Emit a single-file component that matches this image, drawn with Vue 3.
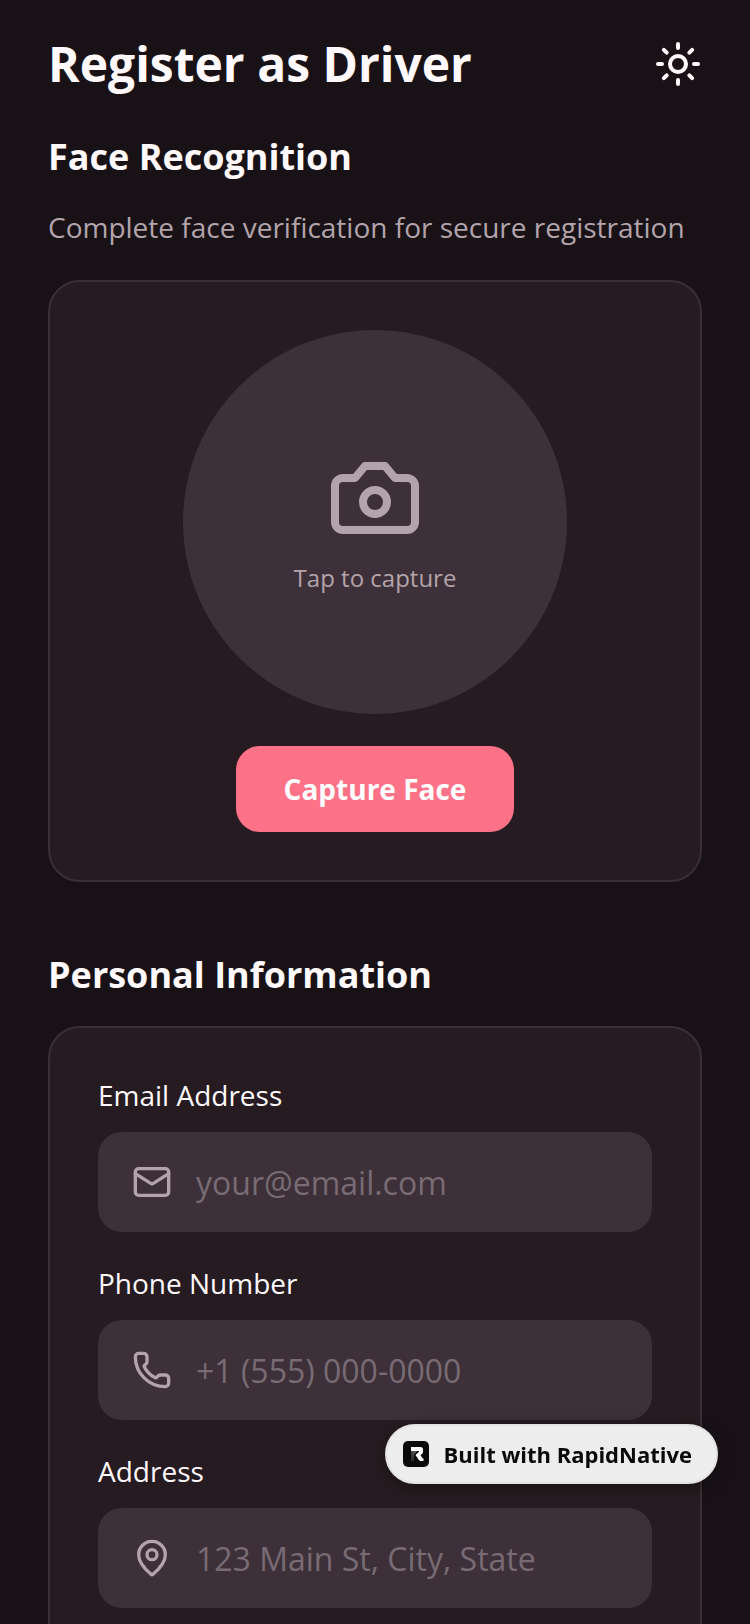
<template>
  <div class="screen">
    <header class="header">
      <h1 class="title">Register as Driver</h1>
      <button class="theme-toggle" type="button" aria-label="Toggle theme">
        <svg viewBox="0 0 24 24" class="icon">
          <circle cx="12" cy="12" r="4" />
          <path d="M12 2v2M12 20v2M4.93 4.93l1.41 1.41M17.66 17.66l1.41 1.41M2 12h2M20 12h2M6.34 17.66l-1.41 1.41M19.07 4.93l-1.41 1.41" />
        </svg>
      </button>
    </header>

    <section class="section">
      <h2 class="heading">Face Recognition</h2>
      <p class="subtitle">Complete face verification for secure registration</p>
      <div class="card face-card">
        <button class="face-circle" type="button">
          <svg viewBox="0 0 24 24" class="icon camera">
            <path d="M14.5 4h-5L7 7H4a2 2 0 0 0-2 2v9a2 2 0 0 0 2 2h16a2 2 0 0 0 2-2V9a2 2 0 0 0-2-2h-3l-2.5-3z" />
            <circle cx="12" cy="13" r="3" />
          </svg>
          <span>Tap to capture</span>
        </button>
        <button class="capture-button" type="button">Capture Face</button>
      </div>
    </section>

    <section class="section">
      <h2 class="heading">Personal Information</h2>
      <form class="card form-card" @submit.prevent>
        <div v-for="field in fields" :key="field.id" class="field">
          <label :for="field.id">{{ field.label }}</label>
          <div class="input-row">
            <svg viewBox="0 0 24 24" class="icon field-icon">
              <path v-for="d in field.icon" :key="d" :d="d" />
            </svg>
            <input
              :id="field.id"
              v-model="form[field.id]"
              :type="field.type"
              :placeholder="field.placeholder"
            >
          </div>
        </div>
      </form>
    </section>

    <a class="badge" href="#">
      <svg viewBox="0 0 26 26" class="badge-logo">
        <defs>
          <linearGradient id="fade" x1="1" y1="0" x2="0" y2="1">
            <stop offset="0" stop-color="#666" />
            <stop offset="1" stop-color="#1c1c1c" />
          </linearGradient>
        </defs>
        <rect width="26" height="26" rx="5" fill="#0a0a0a" />
        <path d="M8 10h6l-3 4v6H8z" fill="url(#fade)" />
        <path d="M8 6h9.500Q20 6 20 8.500V11q0 2-2.500 3l1.500 2.500q.5 1 1.500 1V20H18q-1.500 0-2.500-1.500L12.500 14l3.500-3.200V10H8z" fill="#fff" />
      </svg>
      <span>Built with RapidNative</span>
    </a>
  </div>
</template>

<script setup>
import { reactive } from 'vue'

const form = reactive({
  email: '',
  phone: '',
  address: ''
})

const fields = [
  {
    id: 'email',
    label: 'Email Address',
    type: 'email',
    placeholder: 'your@email.com',
    icon: [
      'M4 4h16a2 2 0 0 1 2 2v12a2 2 0 0 1-2 2H4a2 2 0 0 1-2-2V6a2 2 0 0 1 2-2z',
      'm22 7-8.991 5.727a2 2 0 0 1-2.009 0L2 7'
    ]
  },
  {
    id: 'phone',
    label: 'Phone Number',
    type: 'tel',
    placeholder: '+1 (555) 000-0000',
    icon: [
      'M13.832 16.568a1 1 0 0 0 1.213-.303l.355-.465A2 2 0 0 1 17 15h3a2 2 0 0 1 2 2v3a2 2 0 0 1-2 2A18 18 0 0 1 2 4a2 2 0 0 1 2-2h3a2 2 0 0 1 2 2v3a2 2 0 0 1-.8 1.6l-.468.351a1 1 0 0 0-.292 1.233 14 14 0 0 0 6.392 6.384'
    ]
  },
  {
    id: 'address',
    label: 'Address',
    type: 'text',
    placeholder: '123 Main St, City, State',
    icon: [
      'M20 10c0 4.993-5.539 10.193-7.399 11.799a1 1 0 0 1-1.202 0C9.539 20.193 4 14.993 4 10a8 8 0 0 1 16 0',
      'M12 7a3 3 0 1 1 0 6 3 3 0 0 1 0-6z'
    ]
  }
]
</script>

<style>
body {
  margin: 0;
  background: #181216;
}
</style>

<style scoped>
.screen {
  box-sizing: border-box;
  height: 100vh;
  padding: 32px 48px;
  overflow-y: auto;
  scrollbar-width: none;
  background: #181216;
  color: #fff9fc;
  font-family: "Open Sans", "Noto Sans", sans-serif;
}

button,
input {
  border: none;
  padding: 0;
  background: none;
  color: inherit;
  font-family: inherit;
}

button {
  cursor: pointer;
}

.icon {
  display: block;
  fill: none;
  stroke: currentColor;
  stroke-width: 2;
  stroke-linecap: round;
  stroke-linejoin: round;
}

.header {
  display: flex;
  align-items: center;
  justify-content: space-between;
  margin-bottom: 32px;
}

.title {
  margin: 0;
  font-size: 48px;
  line-height: 64px;
  font-weight: 700;
}

.theme-toggle .icon {
  width: 48px;
  height: 48px;
}

.section {
  margin-bottom: 64px;
}

.heading {
  margin: 0 0 22px;
  font-size: 36px;
  line-height: 58px;
  font-weight: 700;
}

.subtitle {
  margin: 0 0 34px;
  color: #b3a3ab;
  font-size: 28px;
  line-height: 38px;
}

.card {
  padding: 48px;
  border: 2px solid #3a2f35;
  border-radius: 32px;
  background: #251b20;
}

.face-card {
  display: flex;
  flex-direction: column;
  align-items: center;
  gap: 32px;
}

.face-circle {
  display: flex;
  flex-direction: column;
  align-items: center;
  justify-content: center;
  gap: 16px;
  width: 384px;
  height: 384px;
  border-radius: 50%;
  background: #3d3038;
  color: #b3a3ab;
  font-size: 24px;
  line-height: 32px;
}

.camera {
  width: 96px;
  height: 96px;
}

.capture-button {
  padding: 24px 48px;
  border-radius: 24px;
  background: #fd7287;
  color: #fff;
  font-size: 28px;
  line-height: 38px;
  font-weight: 700;
}

.form-card {
  display: flex;
  flex-direction: column;
  gap: 32px;
}

.field {
  display: flex;
  flex-direction: column;
  gap: 18px;
}

.field label {
  font-size: 28px;
  line-height: 38px;
}

.input-row {
  display: flex;
  align-items: center;
  gap: 24px;
  padding: 24px 32px;
  border: 2px solid #3d3038;
  border-radius: 24px;
  background: #3d3038;
}

.field-icon {
  flex: none;
  width: 40px;
  height: 40px;
  color: #b3a3ab;
}

.input-row input {
  flex: 1;
  min-width: 0;
  height: 48px;
  outline: none;
  font-size: 32px;
}

.input-row input::placeholder {
  color: #786b73;
  opacity: 1;
}

.badge {
  position: fixed;
  right: 32px;
  bottom: 140px;
  display: flex;
  align-items: center;
  gap: 14px;
  box-sizing: border-box;
  height: 60px;
  padding: 0 24px 0 16px;
  border: 2px solid #e4e2e3;
  border-radius: 30px;
  background: #ededed;
  box-shadow: 0 4px 16px rgba(0, 0, 0, 0.3);
  color: #0a0a0a;
  font-size: 22px;
  font-weight: 700;
  text-decoration: none;
}

.badge-logo {
  width: 26px;
  height: 26px;
}
</style>
